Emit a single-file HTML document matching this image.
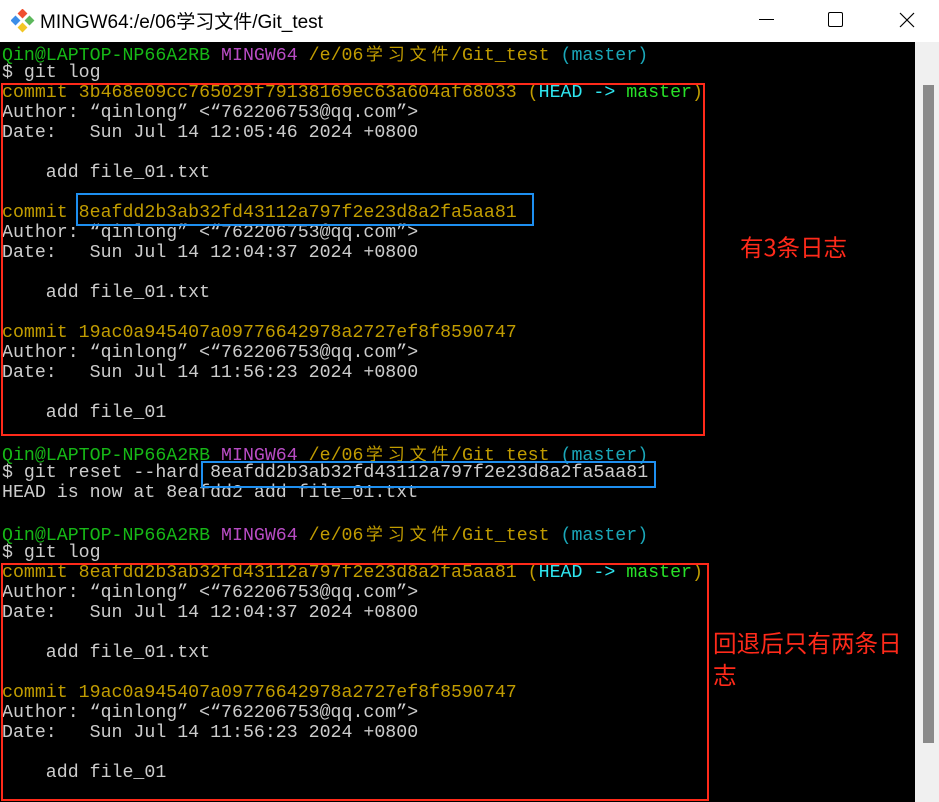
<!DOCTYPE html>
<html><head><meta charset="utf-8"><style>
*{margin:0;padding:0}
body{width:939px;height:802px;overflow:hidden;background:#fff;position:relative;font-family:"Liberation Sans","Noto Sans CJK SC",sans-serif}
#title{position:absolute;left:0;top:0;width:939px;height:42px;background:#fff}
#title .t{position:absolute;left:40px;top:7px;font-size:19px;color:#000;white-space:nowrap}
#term{position:absolute;left:0;top:42px;width:915px;height:760px;background:#000}
#sb{position:absolute;left:915px;top:42px;width:24px;height:760px;background:#f0f0f0}
#thumb{position:absolute;left:923px;top:85px;width:11px;height:658px;background:#8a8a8a}
.l{position:absolute;left:2px;height:20px;line-height:20px;margin-top:1px;font-family:"Liberation Mono","Noto Sans CJK SC",monospace;font-size:18.25px;color:#cccccc;white-space:pre;letter-spacing:0}
.c{display:inline-block;width:21.9px;text-align:center;font-family:"Noto Sans CJK SC",sans-serif;font-size:17px}
.g{color:#16b816}.m{color:#b84cc4}.y{color:#c19c00}.cy{color:#1aa7b8}.hc{color:#2ee6f0}.hg{color:#28e028}
.box{position:absolute;border:2px solid}
.red{border-color:#ff2a1a}.blue{border-color:#1e8ff0}
.ann{position:absolute;color:#ff2a1a;font-family:"Noto Sans CJK SC",sans-serif;font-size:23.5px;line-height:32px;white-space:nowrap}
</style></head><body>
<div id="title">
<svg style="position:absolute;left:11px;top:9px" width="24" height="24" viewBox="0 0 24 24">
<rect x="8" y="1" width="7" height="7" transform="rotate(45 11.5 4.5)" fill="#f05030"/>
<rect x="1" y="8" width="7" height="7" transform="rotate(45 4.5 11.5)" fill="#3c8ee8"/>
<rect x="15" y="8" width="7" height="7" transform="rotate(45 18.5 11.5)" fill="#5cb85c"/>
<rect x="8" y="15" width="7" height="7" transform="rotate(45 11.5 18.5)" fill="#f2c624"/>
</svg>
<div class="t">MINGW64:/e/06学习文件/Git_test</div>
<div style="position:absolute;left:759px;top:19px;width:15px;height:1px;background:#000"></div>
<div style="position:absolute;left:828px;top:12px;width:13px;height:13px;border:1.2px solid #000;border-radius:2px"></div>
<svg style="position:absolute;left:899px;top:12px" width="16" height="16" viewBox="0 0 16 16"><path d="M1 1L15 15M15 1L1 15" stroke="#000" stroke-width="1.2"/></svg>
</div>
<div id="term"></div>
<div id="sb"></div><div id="thumb"></div>

<div class="l" style="top:42px"><span class="g">Qin@LAPTOP-NP66A2RB</span> <span class="m">MINGW64</span> <span class="y">/e/06<span class="c">学</span><span class="c">习</span><span class="c">文</span><span class="c">件</span>/Git_test</span> <span class="cy">(master)</span></div>
<div class="l" style="top:62px">$ git log</div>
<div class="l" style="top:82px"><span class="y">commit 3b468e09cc765029f79138169ec63a604af68033 (</span><span class="hc">HEAD -&gt; </span><span class="hg">master</span><span class="y">)</span></div>
<div class="l" style="top:102px">Author: “qinlong” &lt;“762206753@qq.com”&gt;</div>
<div class="l" style="top:122px">Date:   Sun Jul 14 12:05:46 2024 +0800</div>
<div class="l" style="top:162px">    add file_01.txt</div>
<div class="l" style="top:202px"><span class="y">commit 8eafdd2b3ab32fd43112a797f2e23d8a2fa5aa81</span></div>
<div class="l" style="top:222px">Author: “qinlong” &lt;“762206753@qq.com”&gt;</div>
<div class="l" style="top:242px">Date:   Sun Jul 14 12:04:37 2024 +0800</div>
<div class="l" style="top:282px">    add file_01.txt</div>
<div class="l" style="top:322px"><span class="y">commit 19ac0a945407a09776642978a2727ef8f8590747</span></div>
<div class="l" style="top:342px">Author: “qinlong” &lt;“762206753@qq.com”&gt;</div>
<div class="l" style="top:362px">Date:   Sun Jul 14 11:56:23 2024 +0800</div>
<div class="l" style="top:402px">    add file_01</div>
<div class="l" style="top:442px"><span class="g">Qin@LAPTOP-NP66A2RB</span> <span class="m">MINGW64</span> <span class="y">/e/06<span class="c">学</span><span class="c">习</span><span class="c">文</span><span class="c">件</span>/Git_test</span> <span class="cy">(master)</span></div>
<div class="l" style="top:462px">$ git reset --hard 8eafdd2b3ab32fd43112a797f2e23d8a2fa5aa81</div>
<div class="l" style="top:482px">HEAD is now at 8eafdd2 add file_01.txt</div>
<div class="l" style="top:522px"><span class="g">Qin@LAPTOP-NP66A2RB</span> <span class="m">MINGW64</span> <span class="y">/e/06<span class="c">学</span><span class="c">习</span><span class="c">文</span><span class="c">件</span>/Git_test</span> <span class="cy">(master)</span></div>
<div class="l" style="top:542px">$ git log</div>
<div class="l" style="top:562px"><span class="y">commit 8eafdd2b3ab32fd43112a797f2e23d8a2fa5aa81 (</span><span class="hc">HEAD -&gt; </span><span class="hg">master</span><span class="y">)</span></div>
<div class="l" style="top:582px">Author: “qinlong” &lt;“762206753@qq.com”&gt;</div>
<div class="l" style="top:602px">Date:   Sun Jul 14 12:04:37 2024 +0800</div>
<div class="l" style="top:642px">    add file_01.txt</div>
<div class="l" style="top:682px"><span class="y">commit 19ac0a945407a09776642978a2727ef8f8590747</span></div>
<div class="l" style="top:702px">Author: “qinlong” &lt;“762206753@qq.com”&gt;</div>
<div class="l" style="top:722px">Date:   Sun Jul 14 11:56:23 2024 +0800</div>
<div class="l" style="top:762px">    add file_01</div>

<div class="box red" style="left:1px;top:83px;width:700px;height:349px"></div>
<div class="box blue" style="left:76px;top:193px;width:454px;height:29px"></div>
<div class="box blue" style="left:201px;top:461px;width:451px;height:23px"></div>
<div class="box red" style="left:1px;top:563px;width:704px;height:234px"></div>

<div class="ann" style="left:740px;top:230px">有3条日志</div>
<div class="ann" style="left:713px;top:626px;font-size:23.6px">回退后只有两条日<br>志</div>
</body></html>
